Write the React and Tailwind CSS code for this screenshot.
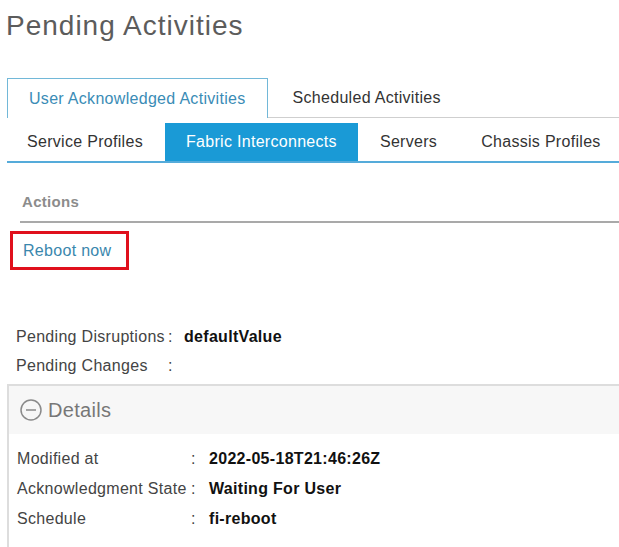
export default function App() {
  const pending = [
    { label: 'Pending Disruptions', value: 'defaultValue' },
    { label: 'Pending Changes', value: '' },
  ];

  const details = [
    { label: 'Modified at', value: '2022-05-18T21:46:26Z' },
    { label: 'Acknowledgment State', value: 'Waiting For User' },
    { label: 'Schedule', value: 'fi-reboot' },
  ];

  const subTabs = ['Service Profiles', 'Fabric Interconnects', 'Servers', 'Chassis Profiles'];

  return (
    <div className="w-[619px] h-[547px] overflow-hidden bg-white font-['Liberation_Sans',Arial,sans-serif] tracking-[0.3px] text-[#333]">
      {/* Title */}
      <h1 className="pt-[10px] pl-[6px] text-[28px] leading-[32px] tracking-[1px] text-[#5c5c5c]">
        Pending Activities
      </h1>

      {/* Top tabs */}
      <div className="flex mt-[36px] pl-[7px]">
        <div className="h-[40px] pl-[21px] pr-[21px] flex items-center whitespace-nowrap border-[1.5px] border-b-0 border-[#72b8d8] text-[16px] text-[#3a8cb6]">
          User Acknowledged Activities
        </div>
        <div className="flex-1 h-[40px] pl-[25px] flex items-center whitespace-nowrap border-b border-[#cfcfcf] text-[16px] text-[#333]">
          Scheduled Activities
        </div>
      </div>

      {/* Sub tabs */}
      <div className="flex mt-[5px] ml-[7px] border-b-2 border-[#55abda]">
        {subTabs.map((tab, i) => (
          <div
            key={tab}
            className={`h-[38px] shrink-0 whitespace-nowrap flex items-center text-[16px] ${
              i === 1 ? 'bg-[#1a9ad6] text-white px-[21px]' : 'text-[#333] px-[22px]'
            } ${i === 0 ? 'pl-[20px] pr-[22px]' : ''}`}
          >
            {tab}
          </div>
        ))}
      </div>

      {/* Actions */}
      <div className="ml-[20px] mt-[29px] pl-[2px] pb-[9px] border-b-2 border-[#a9a9a9] text-[15px] leading-[20px] font-bold text-[#8c8c8c]">
        Actions
      </div>
      <div className="ml-[10px] mt-[8px] w-[119px] h-[39px] border-[3px] border-[#e0101c] flex items-center pl-[10px] text-[16px] text-[#3a87ad]">
        Reboot now
      </div>

      {/* Pending info */}
      <div className="mt-[52px] pl-[16px]">
        {pending.map(row => (
          <div key={row.label} className="h-[29px] flex items-center text-[16px]">
            <span className="w-[152px] text-[#444]">{row.label}</span>
            <span className="w-[16px] text-[#444]">:</span>
            <span className="font-bold text-[#111]">{row.value}</span>
          </div>
        ))}
      </div>

      {/* Details panel */}
      <div className="mt-[4px] ml-[7px] w-[640px] border-2 border-r-0 border-[#dddddd]">
        <div className="h-[48px] bg-[#f7f7f7] flex items-center pl-[11px] gap-[6px]">
          <svg width="22" height="22" viewBox="0 0 22 22" fill="none">
            <circle cx="11" cy="11" r="10" stroke="#8a8a8a" strokeWidth="1.5" />
            <line x1="6" y1="11" x2="16" y2="11" stroke="#8a8a8a" strokeWidth="1.5" />
          </svg>
          <span className="text-[20px] text-[#777]">Details</span>
        </div>
        <div className="pt-[10px] pl-[8px] pb-[20px]">
          {details.map(row => (
            <div key={row.label} className="h-[30px] flex items-center text-[16px]">
              <span className="w-[174px] text-[#444]">{row.label}</span>
              <span className="w-[18px] text-[#444]">:</span>
              <span className="font-bold text-[#111]">{row.value}</span>
            </div>
          ))}
        </div>
      </div>
    </div>
  );
}
